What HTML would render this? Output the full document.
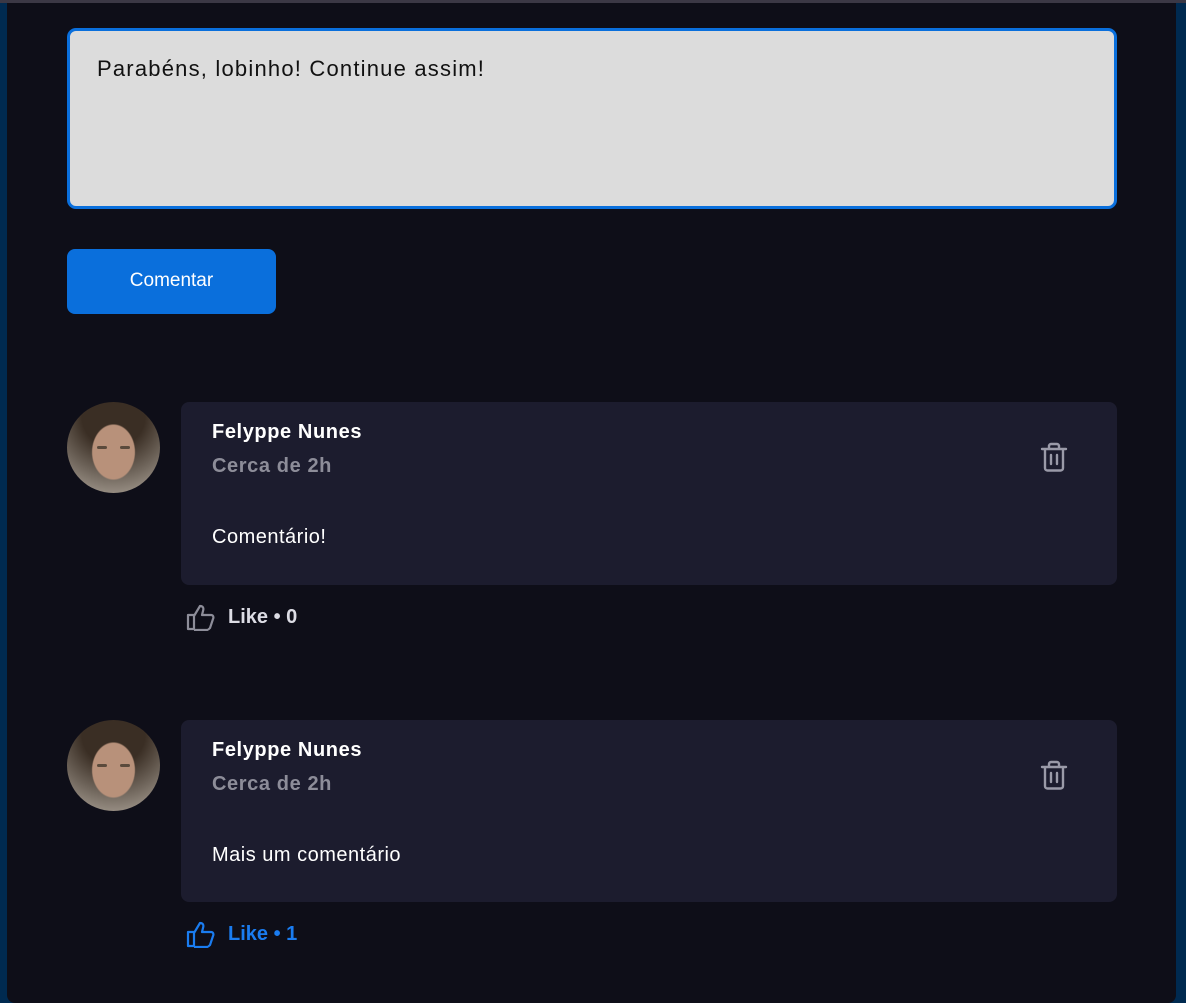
<!DOCTYPE html>
<html><head><meta charset="utf-8"><style>
*{box-sizing:border-box;margin:0;padding:0}
body{width:1186px;height:997px;background:#002a50;font-family:"Liberation Sans",sans-serif;position:relative;overflow:hidden}
.top{position:absolute;left:0;top:0;width:1186px;height:3px;background:#3b3845}
.panel{position:absolute;left:7px;top:3px;width:1169px;height:1000px;background:#0e0e18;border-radius:0 0 8px 8px}
.ta{position:absolute;left:67px;top:28px;width:1050px;height:181px;background:#dcdcdc;border:3px solid #0a6fdc;border-radius:9px;padding:25px 27px;font-size:22px;letter-spacing:1.2px;color:#111}
.btn{position:absolute;left:67px;top:249px;width:209px;height:65px;background:#0a6fdc;border-radius:8px;color:#fff;font-size:19px;text-align:center;line-height:63px}
.av{position:absolute;left:67px;width:93px;height:91px;border-radius:50%;overflow:hidden;background:radial-gradient(ellipse 32% 42% at 50% 55%,#b8917a 0 70%,transparent 74%),radial-gradient(circle at 50% 15%,#3a2e24 0 35%,#6e645a 65%,#b0a79c 100%)}
.av i{position:absolute;width:10px;height:3px;background:#5a4a3c;border-radius:2px;top:44px}
.card{position:absolute;left:181px;width:936px;height:183px;background:#1c1c2e;border-radius:8px}
.name{position:absolute;left:31px;top:19px;font-size:20px;letter-spacing:0.6px;font-weight:bold;color:#fff}
.time{position:absolute;left:31px;top:53px;font-size:20px;letter-spacing:0.6px;font-weight:bold;color:#8d8d99}
.txt{position:absolute;left:31px;top:124px;font-size:20px;letter-spacing:0.5px;color:#fff}
.trash{position:absolute;left:858px;top:38px}
.like{position:absolute;left:186px;font-size:20px;font-weight:bold;display:flex;align-items:center;gap:12px}
</style></head><body>
<div class="top"></div>
<div class="panel"></div>
<div class="ta">Parabéns, lobinho! Continue assim!</div>
<div class="btn">Comentar</div>

<div class="av" style="top:402px"><i style="left:30px"></i><i style="left:53px"></i></div>
<div class="card" style="top:402px">
<div class="name">Felyppe Nunes</div><div class="time">Cerca de 2h</div>
<div class="txt">Comentário!</div>
<svg class="trash" width="30" height="34" viewBox="0 0 30 34" fill="none" stroke="#9a9aa8" stroke-width="2.4" stroke-linejoin="round" stroke-linecap="round"><path d="M3 9h24M10 9V6c0-1 1-2 2-2h6c1 0 2 1 2 2v3M6 9v19c0 1.5 1 2.5 2.5 2.5h13c1.5 0 2.5-1 2.5-2.5V9M12 15v9M18 15v9"/></svg>
</div>
<div class="like" style="top:603px;color:#dcdce4"><svg width="30" height="28" viewBox="0 0 30 28" fill="none" stroke="#8d8d99" stroke-width="2.2" stroke-linejoin="round"><path d="M2 12h6v14H2zM8 13l6-10c3 0 4 2 3 5l-1 4h9c2 0 3 2 2 4l-3 9c-1 1-2 2-3 2H8"/></svg>Like • 0</div>

<div class="av" style="top:720px"><i style="left:30px"></i><i style="left:53px"></i></div>
<div class="card" style="top:720px;height:182px">
<div class="name">Felyppe Nunes</div><div class="time">Cerca de 2h</div>
<div class="txt">Mais um comentário</div>
<svg class="trash" width="30" height="34" viewBox="0 0 30 34" fill="none" stroke="#9a9aa8" stroke-width="2.4" stroke-linejoin="round" stroke-linecap="round"><path d="M3 9h24M10 9V6c0-1 1-2 2-2h6c1 0 2 1 2 2v3M6 9v19c0 1.5 1 2.5 2.5 2.5h13c1.5 0 2.5-1 2.5-2.5V9M12 15v9M18 15v9"/></svg>
</div>
<div class="like" style="top:920px;color:#1a7cf0"><svg width="30" height="28" viewBox="0 0 30 28" fill="none" stroke="#1a7cf0" stroke-width="2.2" stroke-linejoin="round"><path d="M2 12h6v14H2zM8 13l6-10c3 0 4 2 3 5l-1 4h9c2 0 3 2 2 4l-3 9c-1 1-2 2-3 2H8"/></svg>Like • 1</div>
</body></html>
